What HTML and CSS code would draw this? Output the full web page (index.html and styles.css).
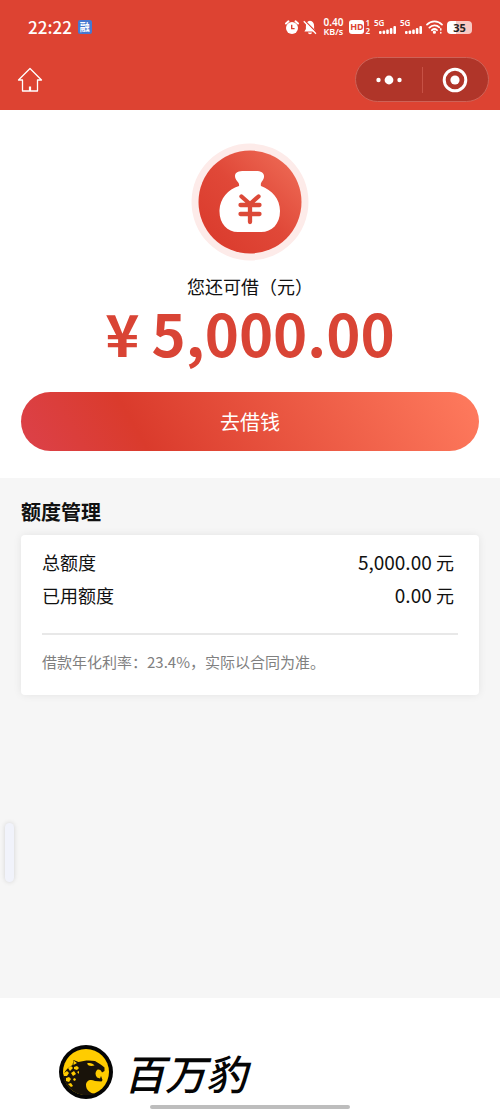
FILE: index.html
```html
<!DOCTYPE html>
<html lang="zh-CN">
  <head>
    <meta charset="UTF-8" />
    <meta name="viewport" content="width=device-width, initial-scale=1.0" />
    <title>百万豹</title>
    <link rel="stylesheet" href="styles.css">
  </head>
  <body>
    <header class="header">
      <div class="status-bar">
        <div class="status-left">
          <span class="clock">22:22</span>
          <span class="app-badge">融</span>
        </div>
        <div class="status-right">
          <svg class="alarm" width="14" height="15" viewBox="0 0 14 15">
            <circle cx="7" cy="8" r="6" fill="#fff" />
            <path d="M1 3.5L3.5 1.3M13 3.5L10.5 1.3" stroke="#fff" stroke-width="2" stroke-linecap="round" />
            <path d="M6.7 4.8V8.6H9.6" fill="none" stroke="#dd4332" stroke-width="1.4" />
          </svg>
          <svg class="bell" width="14" height="15" viewBox="0 0 14 15">
            <path d="M7 .8C4.2 1 2.9 3.2 2.9 6V9L1.4 11.5H12.6L11.1 9V6C11.1 3.2 9.8 1 7 .8Z" fill="#fff" />
            <path d="M5 12.5H9C8.8 14.8 5.2 14.8 5 12.5Z" fill="#fff" />
            <path d="M2 1L14 13" stroke="#dd4332" stroke-width="1.5" />
            <path d="M.8 1.3L13 13.8" stroke="#fff" stroke-width="1.3" />
          </svg>
          <span class="speed"><span>0.40</span><span>KB/s</span></span>
          <span class="hd"><span class="hd-box">HD</span><span class="hd-num"><span>1</span><span>2</span></span></span>
          <span class="signal">
            <span>5G</span>
            <svg width="17" height="8" viewBox="0 0 17 8" fill="#fff">
              <rect x="0" y="5" width="2.6" height="3" rx="1" /><rect x="3.6" y="4.500" width="2.6" height="3.500" rx="1" /><rect x="7.2" y="3.500" width="2.6" height="4.500" rx="1" /><rect x="10.8" y="2" width="2.6" height="6" rx="1" /><rect x="14.4" y="0" width="2.6" height="8" rx="1" />
            </svg>
          </span>
          <span class="signal">
            <span>5G</span>
            <svg width="17" height="8" viewBox="0 0 17 8" fill="#fff">
              <rect x="0" y="5" width="2.6" height="3" rx="1" /><rect x="3.6" y="4.500" width="2.6" height="3.500" rx="1" /><rect x="7.2" y="3.500" width="2.6" height="4.500" rx="1" /><rect x="10.8" y="2" width="2.6" height="6" rx="1" /><rect x="14.4" y="0" width="2.6" height="8" rx="1" />
            </svg>
          </span>
          <svg class="wifi" width="17" height="14" viewBox="0 0 17 14" fill="none" stroke="#fff" stroke-width="1.8" stroke-linecap="round">
            <path d="M1 4.6C5 .3 12 .3 16 4.6M3.4 7.6C6.3 4.7 10.7 4.7 13.3 7.4M5.9 10.2C7.5 8.8 9.5 8.8 11 10.2" />
            <circle cx="8.4" cy="12.2" r=".7" fill="#fff" />
            <path d="M14.8 8.8V10M14.8 12.4V13" stroke-width="1.5" />
          </svg>
          <span class="battery">35</span>
        </div>
      </div>
      <nav class="nav-bar">
        <a class="home" href="#" aria-label="首页">
          <svg width="26" height="26" viewBox="0 0 26 26" fill="none" stroke="#fff" stroke-width="1.3" stroke-linejoin="round">
            <path d="M13 1.5L1.5 13H5.5V24H20.5V13H24.5Z" />
            <path d="M13 19.5V24" stroke-width="2.2" />
          </svg>
        </a>
        <div class="capsule">
          <button type="button" aria-label="更多">
            <svg width="28" height="10" viewBox="0 0 28 10" fill="#fff">
              <circle cx="3.5" cy="5" r="2.2" /><circle cx="14" cy="5" r="4.4" /><circle cx="24.5" cy="5" r="2.2" />
            </svg>
          </button>
          <button type="button" aria-label="关闭">
            <svg width="26" height="26" viewBox="0 0 26 26">
              <circle cx="13" cy="13" r="10.8" fill="none" stroke="#fff" stroke-width="3" />
              <circle cx="13" cy="13" r="4.6" fill="#fff" />
            </svg>
          </button>
        </div>
      </nav>
    </header>

    <main class="main">
      <section class="loan">
        <svg class="bag" width="118" height="118" viewBox="0 0 118 118">
          <defs>
            <linearGradient id="bagFill" x1="0" y1="1" x2="1" y2="0">
              <stop offset="0" stop-color="#d9382a" />
              <stop offset=".5" stop-color="#e04838" />
              <stop offset="1" stop-color="#f0705a" />
            </linearGradient>
          </defs>
          <circle cx="59" cy="59" r="58.5" fill="#fdebe9" />
          <circle cx="59" cy="59" r="51.5" fill="url(#bagFill)" />
          <path d="M48 43C49 39 44 38 44 33C44 29 48 28 53 28H65C70 28 73.500 30 73 34C72.500 38 69 39 70 43C81 47 89 56 89 68C89 81 81 89 70 89H47C36 89 28 80 28.500 67C29 56 37 46 48 43Z" fill="#fff" />
          <path d="M50.500 53.500L59 61L67.500 53.500M49.500 62H68.500M49.500 71H68.500M59 62V79" fill="none" stroke="#dc4938" stroke-width="4.300" stroke-linecap="round" stroke-linejoin="round" />
        </svg>
        <p class="loan-label">您还可借（元）</p>
        <p class="loan-amount"><span>¥</span><span>5,000.00</span></p>
        <button class="loan-button" type="button">去借钱</button>
      </section>

      <section class="quota">
        <h2>额度管理</h2>
        <div class="card">
          <dl>
            <div class="row">
              <dt>总额度</dt>
              <dd>5,000.00 <span>元</span></dd>
            </div>
            <div class="row">
              <dt>已用额度</dt>
              <dd>0.00 <span>元</span></dd>
            </div>
          </dl>
          <p class="note">借款年化利率：23.4%，实际以合同为准。</p>
        </div>
      </section>
    </main>

    <footer class="footer">
      <svg class="logo" width="54" height="54" viewBox="0 0 54 54">
        <circle cx="27" cy="27" r="27" fill="#050505" />
        <circle cx="27" cy="27" r="23" fill="#fc0" />
        <path d="M13.500 20L14.500 15L19.500 17C25 15.500 30 15 36 16C39 18 43 20 45.500 22.500L45.500 26L43 27.500C42 25 40 24 38 25C36 27 36 30 38 32.500L41 33.500L42 31L43.500 35L42.500 36.500L36 36C31 33.500 27 36 27 40C27 45 31 48 36 49C24 53 9 48 4 32C5 27 8 23 13.500 20Z" fill="#19130a" />
        <path d="M28 18.500C31 17.500 34 18.500 35.500 20.500C32 21.500 29 21 28 18.500Z" fill="#fc0" />
        <g fill="#fc0">
          <path d="M14.500 15.500L18 18L14.500 20ZM9 23L12 21L14 23L11 26ZM15 22L18 21L20 23L18 25L15 24ZM5 28L8 26L10 28L8 31L5 31ZM12 28L15 26L17 29L14 31ZM18 27L20 26L20 29ZM7 33L10 32L12 34L10 37L7 36ZM14 34L16 33L17 35L15 36ZM9 39L12 38L14 41L12 42Z" />
        </g>
      </svg>
      <span class="brand">百万豹</span>
    </footer>

    <div class="side-handle"></div>
    <div class="home-indicator"></div>
  </body>
</html>
```
FILE: styles.css
```css
* {
  box-sizing: border-box;
}

body {
  margin: 0;
  min-height: 100vh;
  display: flex;
  flex-direction: column;
  background-color: #fff;
  color: #111;
  font-family: "Noto Sans CJK SC", sans-serif;
}

h2, p, dl, dd {
  margin: 0;
}

button {
  padding: 0;
  border: none;
  background: none;
  color: #fff;
  font-family: inherit;
  cursor: pointer;
}

svg {
  display: block;
  flex-shrink: 0;
}

.header {
  background-color: #dd4332;
  color: #fff;
  height: 110px;
}

.status-bar {
  height: 54px;
  padding: 0 28px;
  display: flex;
  justify-content: space-between;
  align-items: center;
}

.status-left,
.status-right {
  display: flex;
  align-items: center;
}

.status-left {
  gap: 6px;
}

.status-right {
  gap: 4px;
}

.clock {
  font-size: 17px;
  line-height: 20px;
  font-weight: 500;
}

.app-badge {
  width: 14px;
  height: 14px;
  border-radius: 2px;
  background-color: #4678d0;
  font-size: 10px;
  line-height: 14px;
  font-weight: bold;
  text-align: center;
}

.speed,
.hd-num {
  display: flex;
  flex-direction: column;
  align-items: center;
  font-family: "Noto Sans", sans-serif;
  font-weight: 600;
}

.speed {
  width: 24px;
  font-size: 9px;
  line-height: 9px;
}

.speed span:first-child {
  font-size: 10px;
}

.hd {
  display: flex;
  align-items: center;
  gap: 1px;
}

.hd-box {
  width: 15px;
  height: 14px;
  border-radius: 3px;
  background-color: #fff;
  color: #dd4332;
  font-family: "Noto Sans", sans-serif;
  font-size: 9px;
  line-height: 14px;
  font-weight: bold;
  text-align: center;
}

.hd-num {
  font-size: 8px;
  line-height: 8px;
}

.signal {
  display: flex;
  flex-direction: column;
  width: 22px;
  height: 14px;
  font-family: "Noto Sans", sans-serif;
  font-size: 8px;
  line-height: 6px;
  font-weight: 600;
}

.signal svg {
  align-self: flex-end;
}

.battery {
  width: 25px;
  height: 13px;
  border-radius: 4px;
  background: linear-gradient(to right, #fff 35%, #f8c9c3 35%);
  color: #222;
  font-family: "Noto Sans", sans-serif;
  font-size: 11px;
  line-height: 13px;
  font-weight: bold;
  text-align: center;
}

.nav-bar {
  padding: 3px 11px 0 17px;
  display: flex;
  justify-content: space-between;
  align-items: center;
}

.capsule {
  width: 134px;
  height: 45px;
  display: flex;
  align-items: center;
  border: 1px solid #ce6257;
  border-radius: 23px;
  background-color: #b03529;
}

.capsule button {
  flex: 1;
  height: 26px;
  display: flex;
  justify-content: center;
  align-items: center;
}

.capsule button + button {
  border-left: 1px solid #c75145;
}

.main {
  flex: 1;
  display: flex;
  flex-direction: column;
}

.loan {
  padding: 33px 21px 27px;
  display: flex;
  flex-direction: column;
  align-items: center;
}

.loan-label {
  margin-top: 12px;
  font-size: 18px;
  line-height: 26px;
}

.loan-amount {
  display: flex;
  gap: 12px;
  color: #d94435;
  font-size: 58px;
  line-height: 66px;
  font-weight: bold;
}

.loan-button {
  width: 100%;
  height: 59px;
  margin-top: 27px;
  border-radius: 30px;
  background: linear-gradient(60deg, #dc414a 0%, #da3b2c 26%, #ff7b5e 100%);
  font-size: 20px;
}

.quota {
  flex: 1;
  padding: 20px 21px;
  background-color: #f6f6f6;
}

.quota h2 {
  font-size: 20px;
  line-height: 28px;
  font-weight: bold;
}

.card {
  margin-top: 9px;
  padding: 10px 21px 20px;
  border-radius: 4px;
  background-color: #fff;
  box-shadow: 0 0 8px rgba(0, 0, 0, 0.08);
}

.row {
  height: 33px;
  padding-right: 4px;
  display: flex;
  justify-content: space-between;
  align-items: center;
  font-size: 18px;
}

.row dd {
  font-size: 19px;
}

.row dd span {
  font-size: 18px;
}

.note {
  margin-top: 22px;
  padding-top: 14px;
  border-top: 2px solid #e8e8e8;
  color: #808080;
  font-size: 15px;
  line-height: 26px;
}

.footer {
  height: 113px;
  padding: 34px 59px 0;
  display: flex;
  align-items: center;
  gap: 11px;
}

.brand {
  color: #050505;
  font-size: 41px;
  line-height: 54px;
  font-style: italic;
  font-weight: 500;
}

.side-handle {
  position: fixed;
  top: 823px;
  left: 5px;
  width: 9px;
  height: 59px;
  border-radius: 5px;
  background-color: #f1f3fb;
  box-shadow: 0 0 5px rgba(0, 0, 0, 0.15);
}

.home-indicator {
  position: fixed;
  bottom: 2px;
  left: 30%;
  width: 40%;
  height: 4px;
  border-radius: 2px;
  background-color: #bdbdbd;
}
```
